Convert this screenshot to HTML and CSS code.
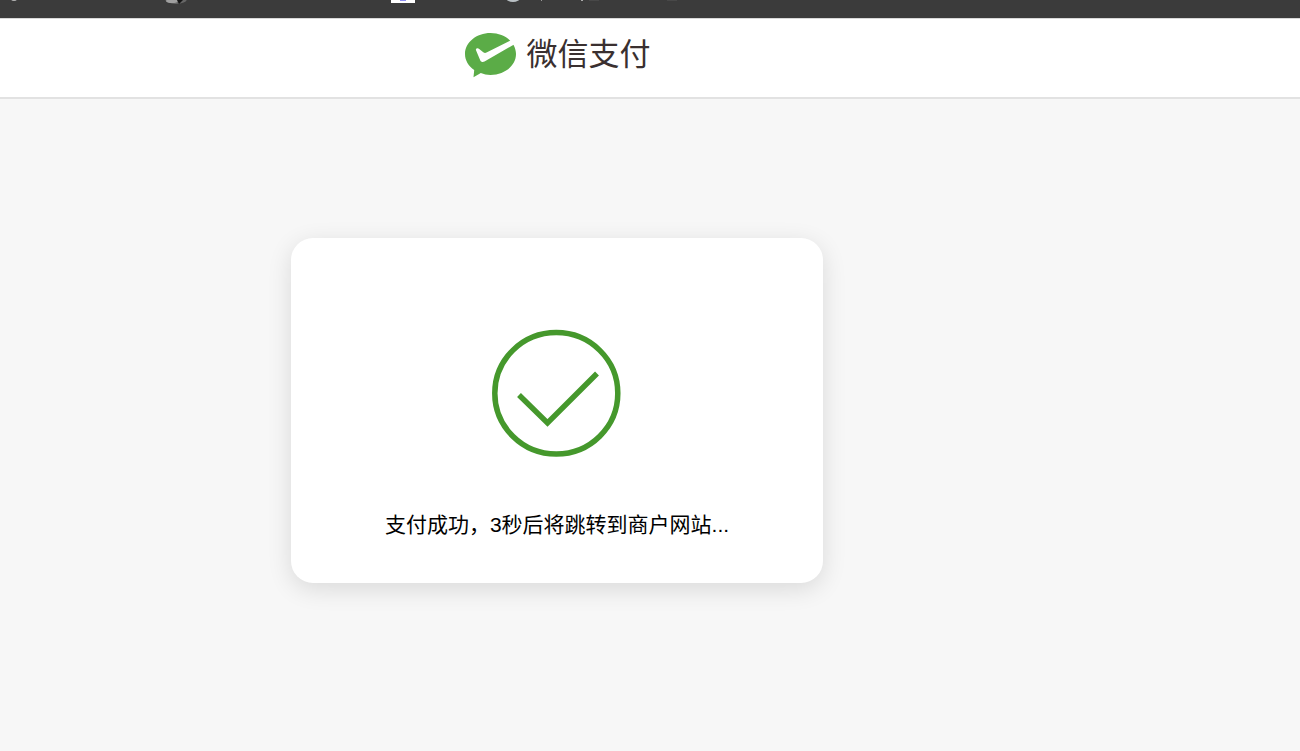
FILE: index.html
```html
<!DOCTYPE html>
<html lang="zh-CN">

<head>
  <meta charset="UTF-8">
  <meta name="viewport" content="width=device-width, initial-scale=1.0">
  <title>微信支付</title>
  <link rel="stylesheet" href="styles.css">
</head>

<body>
  <div class="top-bar">
    <svg class="tab-icons" width="700" height="17" viewBox="0 0 700 17" aria-hidden="true">
      <ellipse cx="14" cy="-1" rx="3" ry="2" fill="#b5b5b5" />
      <ellipse cx="176" cy="-1" rx="11" ry="5" fill="#666" />
      <ellipse cx="172" cy="1" rx="6" ry="2" fill="#a0a0a0" />
      <path d="M177 0h6l-4 4z" fill="#151515" />
      <rect x="391" y="0" width="24" height="3" fill="#fff" />
      <rect x="400" y="0" width="6" height="1" fill="#8c8cf0" />
      <ellipse cx="513" cy="-2" rx="7" ry="4" fill="#b9c0c4" />
      <rect x="541" y="0" width="1" height="1" fill="#999" />
      <rect x="581" y="0" width="2" height="1" fill="#aaa" />
      <rect x="589" y="0" width="10" height="1" fill="#484848" />
      <rect x="667" y="0" width="10" height="1" fill="#484848" />
    </svg>
  </div>
  <header class="header">
    <div class="logo">
      <svg class="logo-icon" width="52" height="45" viewBox="0 0 52 45" aria-hidden="true">
        <path d="M26.500 0C12.400 0 1 9.400 1 21c0 6.500 3.500 12 9.200 16L9.500 44.200l7.300-4.100C19.800 41.400 23 42 26.500 42 40.600 42 52 32.600 52 21S40.600 0 26.500 0z" fill="#5bac47" />
        <path d="M12.300 15.800c.9-.8 1.800-.6 2.600 0l4.400 3.500c1 .7 2 .8 3.200.3L47.500 7l3 4.200L20.500 28.600c-1.700.9-3.400.5-4.200-1L12 17.300c-.2-.6-.2-1 .3-1.500z" fill="#fff" />
      </svg>
      <span class="logo-text">微信支付</span>
    </div>
  </header>
  <main class="content">
    <div class="card">
      <svg class="success-icon" width="130" height="128" viewBox="0 0 130 128" aria-hidden="true">
        <ellipse cx="64.300" cy="64.300" rx="61.500" ry="60.700" fill="none" stroke="#45982c" stroke-width="5.500" />
        <path d="M27 66L55.500 94L105 44.500" fill="none" stroke="#45982c" stroke-width="5.500" />
      </svg>
      <p class="message">支付成功，3秒后将跳转到商户网站...</p>
    </div>
  </main>
</body>

</html>
```

FILE: styles.css
```css
* {
  box-sizing: border-box;
}

body {
  margin: 0;
  background-color: #f7f7f7;
  font-family: "Liberation Sans", "Noto Sans CJK SC", sans-serif;
  color: #000;
}

.top-bar {
  height: 18px;
  overflow: hidden;
  background-color: #3b3b3b;
}

.tab-icons {
  display: block;
}

.header {
  display: flex;
  justify-content: center;
  height: 81px;
  padding: 14px 186px 0 0;
  background-color: #fff;
  border-top: 1px solid #d8d8d8;
  border-bottom: 2px solid #e2e2e2;
}

.logo {
  display: flex;
  align-items: flex-start;
  gap: 11px;
}

.logo-text {
  font-size: 31px;
  line-height: 44px;
  color: #3a3030;
}

.content {
  display: flex;
  justify-content: center;
  padding: 139px 186px 40px 0;
}

.card {
  display: flex;
  flex-direction: column;
  align-items: center;
  width: 532px;
  padding: 91px 20px 43px;
  background-color: #fff;
  border-radius: 22px;
  box-shadow: 0 6px 24px rgba(0, 0, 0, 0.12);
}

.success-icon {
  display: block;
}

.message {
  margin: 52px 0 0;
  font-size: 21px;
  line-height: 31px;
}
```
